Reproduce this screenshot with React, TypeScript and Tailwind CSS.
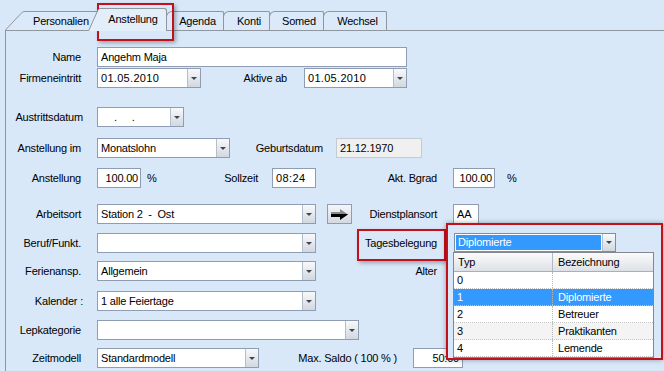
import React from "react";

type P = { w: string; children?: React.ReactNode; cls?: string };

function Tri() {
  return <div className="w-0 h-0 border-x-[3px] border-x-transparent border-t-[3px] border-t-[#3c4654]" />;
}

function Combo({ w, children, cls = "" }: P) {
  return (
    <div className={`${w} h-[20px] shrink-0 flex border border-[#8e9db3] bg-white ${cls}`}>
      <div className="flex-1 min-w-0 pl-[3px] flex items-center whitespace-nowrap overflow-hidden">{children}</div>
      <div className="w-[13px] shrink-0 border-l border-[#b4bfcc] bg-linear-to-b from-[#f8f9fb] to-[#d2d8e0] flex items-center justify-center">
        <Tri />
      </div>
    </div>
  );
}

function Field({ w, children, cls = "" }: P) {
  return (
    <div className={`${w} h-[20px] shrink-0 flex items-center border border-[#8e9db3] bg-white px-[3px] whitespace-nowrap overflow-hidden ${cls}`}>
      {children}
    </div>
  );
}

function L({ w, children, cls = "" }: P) {
  return <div className={`${w} shrink-0 text-right whitespace-nowrap ${cls}`}>{children}</div>;
}

function Row({ mt, children }: { mt: string; children: React.ReactNode }) {
  return <div className={`flex items-center h-[20px] shrink-0 ${mt}`}>{children}</div>;
}

const TAB = "h-[19px] border-t border-r border-l border-[#8e969f] rounded-tl-[6px] rounded-tr-[2px] bg-[#dbe9f9] flex items-center justify-center pl-[5px] -ml-px";

export default function App() {
  return (
    <div className="relative w-[664px] h-[371px] overflow-hidden bg-[#d9e8f9] text-[11px] leading-[13px] text-black tracking-[-0.2px] font-['Liberation_Sans',Arial,sans-serif]">
      {/* Tab strip */}
      <div className="flex items-end h-[30px]">
        <div className="flex items-end ml-[5px]">
          <svg width="20" height="19" viewBox="0 0 20 19" className="block shrink-0">
            <path d="M0 19 L16 2.5 Q17.5 0.5 20 0.5 L20 19 Z" fill="#dbe9f9" />
            <path d="M0.5 19 L16 2.5 Q17.5 0.5 20 0.5" fill="none" stroke="#8e969f" />
          </svg>
          <div className="w-[73px] h-[19px] border-t border-[#8e969f] bg-[#dbe9f9] pl-[8px] flex items-center">Personalien</div>
        </div>
        <div className="relative z-10 flex items-end -ml-[10px] -mb-px">
          <svg width="12" height="23" viewBox="0 0 12 23" className="block shrink-0">
            <path d="M0 23 L10 2 Q11 0.5 12 0.5 L12 23 Z" fill="#e3eefb" />
            <path d="M0.5 23 L10 2 Q11 0.5 12 0.5" fill="none" stroke="#8e969f" />
          </svg>
          <div className="w-[67px] h-[23px] border-t border-r border-[#8e969f] rounded-tr-[3px] bg-[#e3eefb] flex items-center justify-center pb-[2px]">
            Anstellung
          </div>
        </div>
        <div className={`w-[58px] ${TAB}`}>Agenda</div>
        <div className={`w-[47px] ${TAB}`}>Konti</div>
        <div className={`w-[55px] ${TAB}`}>Somed</div>
        <div className={`w-[64px] ${TAB}`}>Wechsel</div>
      </div>

      {/* Panel */}
      <div className="ml-[5px] h-[341px] border-l border-t border-[#8e969f] flex flex-col">
        <Row mt="mt-[16px]">
          <L w="w-[75px]">Name</L>
          <Field w="w-[310px] ml-[16px]">Angehm Maja</Field>
        </Row>
        <Row mt="mt-[1px]">
          <L w="w-[75px]">Firmeneintritt</L>
          <Combo w="w-[104px] ml-[16px]"><span className="tracking-[0.3px]">01.05.2010</span></Combo>
          <L w="w-[86px]">Aktive ab</L>
          <Combo w="w-[103px] ml-[17px]"><span className="tracking-[0.3px]">01.05.2010</span></Combo>
        </Row>
        <Row mt="mt-[19px]">
          <L w="w-[77px]">Austrittsdatum</L>
          <Combo w="w-[87px] ml-[14px]">
            <span className="ml-[13px]">.</span>
            <span className="ml-[15px]">.</span>
          </Combo>
        </Row>
        <Row mt="mt-[11px]">
          <L w="w-[75px]">Anstellung im</L>
          <Combo w="w-[133px] ml-[16px]">Monatslohn</Combo>
          <L w="w-[93px]">Geburtsdatum</L>
          <div className="ml-[13px] w-[86px] h-[20px] shrink-0 flex items-center border border-[#c3cad3] bg-[#f0f0f0] px-[3px]">21.12.1970</div>
        </Row>
        <Row mt="mt-[10px]">
          <L w="w-[75px]">Anstellung</L>
          <Field w="w-[44px] ml-[16px]" cls="justify-end !px-[2px]">100.00</Field>
          <div className="w-[20px] shrink-0 pl-[6px]">%</div>
          <L w="w-[97px]">Sollzeit</L>
          <Field w="w-[44px] ml-[14px]"><span className="tracking-[0.4px]">08:24</span></Field>
          <L w="w-[121px]">Akt. Bgrad</L>
          <Field w="w-[42px] ml-[16px]" cls="justify-end !px-[2px]">100.00</Field>
          <div className="ml-[12px] shrink-0">%</div>
        </Row>
        <Row mt="mt-[16px]">
          <L w="w-[75px]">Arbeitsort</L>
          <Combo w="w-[219px] ml-[16px]">Station 2&nbsp; - &nbsp;Ost</Combo>
          <div className="ml-[11px] w-[25px] h-[20px] shrink-0 border border-[#8e9db3] bg-linear-to-b from-[#f4f6f9] to-[#d3d9e2] flex items-center justify-center">
            <svg width="17" height="11" viewBox="0 0 17 11">
              <defs>
                <linearGradient id="arrowg" x1="0" y1="0" x2="0" y2="1">
                  <stop offset="0.5" stopColor="#8a8a8a" />
                  <stop offset="0.5" stopColor="#000000" />
                </linearGradient>
              </defs>
              <path d="M0 3 H9 V0 L17 5.5 L9 11 V8 H0 Z" fill="url(#arrowg)" />
            </svg>
          </div>
          <L w="w-[85px]">Dienstplansort</L>
          <Field w="w-[26px] ml-[16px]">AA</Field>
        </Row>
        <Row mt="mt-[9px]">
          <L w="w-[75px]">Beruf/Funkt.</L>
          <Combo w="w-[219px] ml-[16px]" />
          <L w="w-[121px]">Tagesbelegung</L>
        </Row>
        <Row mt="mt-[8px]">
          <L w="w-[75px]">Ferienansp.</L>
          <Combo w="w-[219px] ml-[16px]">Allgemein</Combo>
          <L w="w-[121px]">Alter</L>
        </Row>
        <Row mt="mt-[10px]">
          <L w="w-[77px]">Kalender :</L>
          <Combo w="w-[219px] ml-[14px]">1 alle Feiertage</Combo>
        </Row>
        <Row mt="mt-[9px]">
          <L w="w-[75px]">Lepkategorie</L>
          <Combo w="w-[262px] ml-[16px]" />
        </Row>
        <Row mt="mt-[8px]">
          <L w="w-[75px]">Zeitmodell</L>
          <Combo w="w-[162px] ml-[16px]">Standardmodell</Combo>
          <L w="w-[138px]">Max. Saldo ( 100 % )</L>
          <Field w="w-[50px] ml-[16px]" cls="justify-end">50:00</Field>
        </Row>
      </div>

      {/* Red annotation: selected tab */}
      <div className="absolute left-[97px] top-[3px] w-[77px] h-[38px] border-2 border-[#c1121c] shadow-[2px_2px_4px_rgba(0,0,0,0.3)]" />
      {/* Red annotation: Tagesbelegung */}
      <div className="absolute left-[357px] top-[229px] w-[89px] h-[32px] border-2 border-[#c1121c] shadow-[2px_2px_4px_rgba(0,0,0,0.3)]" />

      {/* Open dropdown popup */}
      <div className="absolute left-[446px] top-[223px] w-[217px] h-[137px] border-2 border-[#c1121c] bg-[#d9e8f9] shadow-[0_0_5px_rgba(0,0,0,0.35)] pl-[5px] pt-[8px] flex flex-col">
        <div className="ml-[1px] w-[162px] h-[19px] shrink-0 flex border border-[#7b8ea8] bg-white">
          <div className="flex-1 m-[1px] bg-[#3399ff] text-white pl-[2px] flex items-center">Diplomierte</div>
          <div className="w-[13px] shrink-0 border-l border-[#b4bfcc] bg-linear-to-b from-[#f8f9fb] to-[#d2d8e0] flex items-center justify-center">
            <Tri />
          </div>
        </div>
        <div className="w-[201px] h-[106px] shrink-0 border border-[#828790] bg-white flex flex-col">
          <div className="h-[19px] shrink-0 flex bg-linear-to-b from-[#fbfbfc] to-[#dde1e6] border-b border-[#a9b0b9]">
            <div className="w-[99px] shrink-0 pl-[4px] flex items-center border-r border-[#b3b9c1]">Typ</div>
            <div className="pl-[5px] flex items-center">Bezeichnung</div>
          </div>
          {[
            ["0", "", ""],
            ["1", "Diplomierte", "sel"],
            ["2", "Betreuer", ""],
            ["3", "Praktikanten", "alt"],
            ["4", "Lemende", ""],
          ].map(([t, b, s], i) => (
            <div
              key={i}
              className={`h-[17px] shrink-0 flex border-b border-dotted border-[#c4c4c4] ${
                s === "sel" ? "bg-[#3399ff] text-white" : s === "alt" ? "bg-[#f4f4f4]" : "bg-white"
              }`}
            >
              <div className="w-[99px] shrink-0 pl-[3px] flex items-center border-r border-dotted border-[#b8b8b8]">{t}</div>
              <div className="pl-[5px] flex items-center">{b}</div>
            </div>
          ))}
        </div>
      </div>
    </div>
  );
}
